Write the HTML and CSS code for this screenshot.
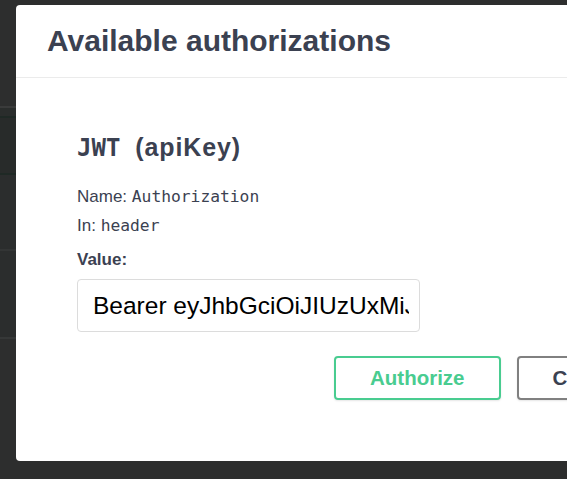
FILE: index.html
```html
<!DOCTYPE html>
<html lang="en">
<head>
<meta charset="utf-8">
<title>Available authorizations</title>
<link rel="stylesheet" href="styles.css">
</head>
<body>
<div class="backdrop">
  <div class="modal">
    <div class="modal-header">
      <h3 class="modal-title">Available authorizations</h3>
    </div>
    <div class="modal-content">
      <h4 class="scheme-title"><code class="scheme-code">JWT</code>&nbsp;(apiKey)</h4>
      <p class="meta-row">Name: <code class="meta-code">Authorization</code></p>
      <p class="meta-row">In: <code class="meta-code">header</code></p>
      <label class="value-label" for="token">Value:</label>
      <div class="input-box">
        <input id="token" class="value-input" type="text" value="Bearer eyJhbGciOiJIUzUxMiJ9.eyJzdWIiOiJhZG1pbiJ9">
      </div>
      <div class="btn-row">
        <button class="btn btn-authorize" type="button">Authorize</button>
        <button class="btn btn-close" type="button">Close</button>
      </div>
    </div>
  </div>
</div>
</body>
</html>
```

FILE: styles.css
```css
html, body {
  margin: 0;
  padding: 0;
}

body {
  width: 567px;
  height: 479px;
  overflow: hidden;
  background: #2d2e2e;
  font-family: "Liberation Sans", Arial, sans-serif;
}

.backdrop {
  height: 479px;
  padding: 5px 0 0 16px;
  box-sizing: border-box;
  background:
    linear-gradient(to bottom,
      #2d2e2e 0, #2d2e2e 106px,
      #3a3b3b 106px, #3a3b3b 108px,
      #2a2d2c 108px, #2a2d2c 116px,
      #1f2925 116px, #1f2925 118px,
      #282b2a 118px, #282b2a 173px,
      #1f2925 173px, #1f2925 175px,
      #2b2d2d 175px, #2b2d2d 249px,
      #333535 249px, #333535 251px,
      #2b2d2d 251px, #2b2d2d 337px,
      #363838 337px, #363838 339px,
      #2d2e2e 339px);
}

.modal {
  width: 700px;
  height: 456px;
  background: #ffffff;
  border-radius: 4px;
}

.modal-header {
  height: 72px;
  border-bottom: 1px solid #ebebeb;
  display: flex;
  align-items: center;
  padding-left: 31px;
}

.modal-title {
  margin: 0;
  font-size: 30px;
  line-height: 1;
  font-weight: 700;
  color: #3b4151;
}

.modal-content {
  padding-left: 61px;
}

.scheme-title {
  margin: 54px 0 0;
  font-size: 25px;
  line-height: 30px;
  font-weight: 700;
  color: #3b4151;
  letter-spacing: 0.9px;
}

.scheme-code {
  font-family: "DejaVu Sans Mono", "Liberation Mono", monospace;
  font-size: 24px;
  font-weight: 700;
  letter-spacing: 0;
  margin-right: 7px;
}

.meta-row {
  margin: 0;
  font-size: 17px;
  line-height: 29px;
  color: #3b4151;
}

.meta-row:first-of-type {
  margin-top: 19px;
}

.meta-code {
  font-family: "DejaVu Sans Mono", "Liberation Mono", monospace;
  font-size: 16.3px;
}

.value-label {
  display: block;
  margin-top: 5px;
  font-size: 17px;
  line-height: 29px;
  font-weight: 700;
  color: #3b4151;
}

.input-box {
  margin-top: 5px;
  width: 343px;
}

.value-input {
  display: block;
  width: 100%;
  height: 53px;
  box-sizing: border-box;
  border: 1px solid #dcdcdc;
  border-radius: 4px;
  padding: 0 10px 0 15px;
  font-family: "Liberation Sans", Arial, sans-serif;
  font-size: 24.5px;
  color: #000000;
  background: #ffffff;
  outline: none;
}

.btn-row {
  display: flex;
  gap: 16px;
  margin-top: 24px;
  margin-left: 257px;
}

.btn {
  height: 44px;
  padding: 0 34px;
  border-radius: 4px;
  background: transparent;
  font-family: "Liberation Sans", Arial, sans-serif;
  font-size: 20.5px;
  font-weight: 700;
  box-shadow: 0 1px 2px rgba(0, 0, 0, 0.1);
  cursor: pointer;
}

.btn-authorize {
  border: 2px solid #49cc90;
  color: #49cc90;
}

.btn-close {
  border: 2px solid #808080;
  color: #3b4151;
}
```
